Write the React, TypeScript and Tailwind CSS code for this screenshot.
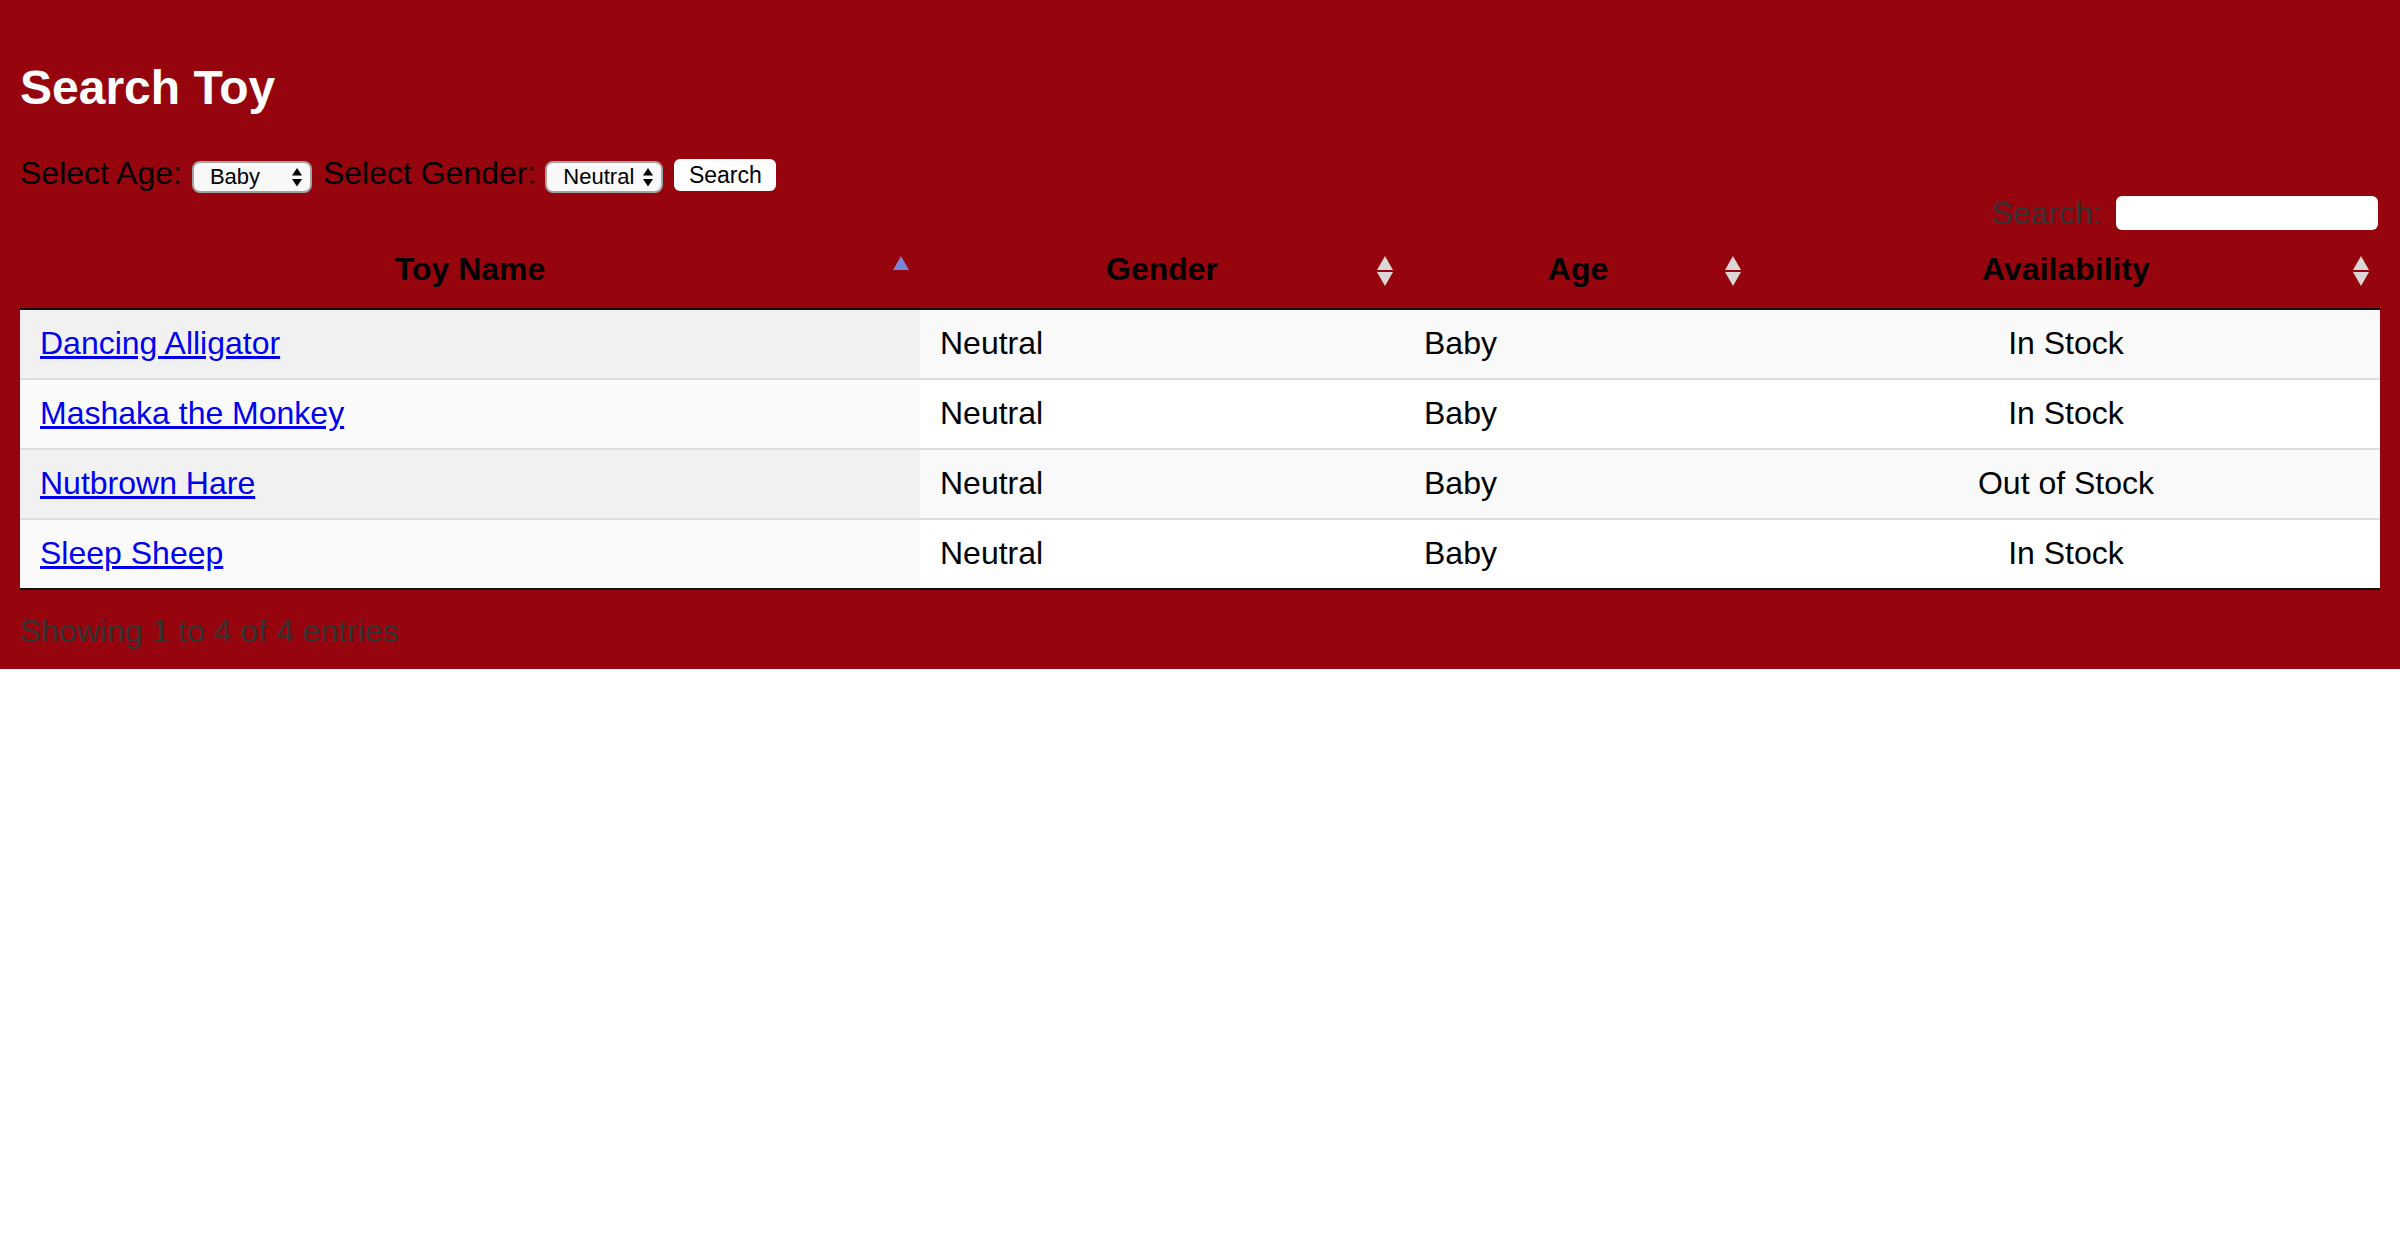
import React from 'react';

const toys = [
  { name: 'Dancing Alligator', gender: 'Neutral', age: 'Baby', availability: 'In Stock' },
  { name: 'Mashaka the Monkey', gender: 'Neutral', age: 'Baby', availability: 'In Stock' },
  { name: 'Nutbrown Hare', gender: 'Neutral', age: 'Baby', availability: 'Out of Stock' },
  { name: 'Sleep Sheep', gender: 'Neutral', age: 'Baby', availability: 'In Stock' },
];

const SortIcon: React.FC<{ active?: boolean }> = ({ active }) => (
  <svg className="absolute right-[11px] top-[26px]" width="16" height="30" viewBox="0 0 16 30">
    {active ? (
      <polygon points="8,0 16,14 0,14" fill="#7c84d8" />
    ) : (
      <>
        <polygon points="8,0 16,14 0,14" fill="#dcd6d6" />
        <polygon points="0,16 16,16 8,30" fill="#dcd6d6" />
      </>
    )}
  </svg>
);

const SelectArrows = () => (
  <svg className="pointer-events-none absolute right-[10px] top-[7px]" width="10" height="19" viewBox="0 0 10 19">
    <polygon points="5,0 10,7.5 0,7.5" fill="#000" />
    <polygon points="0,11 10,11 5,18.5" fill="#000" />
  </svg>
);

const FakeSelect: React.FC<{ value: string; options: string[]; width: string }> = ({ value, options, width }) => (
  <div className={`relative mt-[8px] h-[32px] ${width}`}>
    <select
      defaultValue={value}
      className="block h-full w-full appearance-none rounded-[8px] border-2 border-[#a3a3a3] bg-[#f8f8f8] pl-[16px] text-[22px] leading-[28px] text-black outline-none"
    >
      {options.map((o) => (
        <option key={o}>{o}</option>
      ))}
    </select>
    <SelectArrows />
  </div>
);

const App: React.FC = () => {
  return (
    <div className="min-h-screen bg-white font-['Liberation_Sans',Arial,sans-serif]">
      <div className="bg-[#96050d] px-[20px] pt-[60px] pb-[19px]">
        {/* Title */}
        <h1 className="text-[48px] font-bold leading-[56px] text-white">Search Toy</h1>

        {/* Filters */}
        <div className="mt-[37px] flex items-start text-[32px] leading-[40px] text-black">
          <span>Select Age:</span>
          <div className="ml-[10px]">
            <FakeSelect value="Baby" options={['Baby', 'Toddler', 'Child']} width="w-[120px]" />
          </div>
          <span className="ml-[11px]">Select Gender:</span>
          <div className="ml-[9px]">
            <FakeSelect value="Neutral" options={['Neutral', 'Boy', 'Girl']} width="w-[118px]" />
          </div>
          <button className="ml-[11px] mt-[6px] h-[32px] w-[102px] rounded-[6px] bg-white text-[23px] leading-[32px] text-black">
            Search
          </button>
        </div>

        {/* DataTables filter */}
        <div className="mt-[3px] flex h-[34px] items-center justify-end pr-[2px]">
          <label className="text-[32px] leading-[34px] text-[#333]">Search:</label>
          <input className="ml-[14px] h-[34px] w-[262px] rounded-[6px] bg-white px-[6px] text-[24px] outline-none" />
        </div>

        {/* Table */}
        <table className="w-full table-fixed border-separate border-spacing-0">
          <colgroup>
            <col className="w-[900px]" />
            <col className="w-[484px]" />
            <col className="w-[348px]" />
            <col className="w-[628px]" />
          </colgroup>
          <thead>
            <tr className="text-[32px] font-bold leading-[38px] text-black">
              <th className="relative border-b-2 border-[#111] px-[20px] py-[20px] text-center">
                Toy Name
                <SortIcon active />
              </th>
              <th className="relative border-b-2 border-[#111] px-[20px] py-[20px] text-center">
                Gender
                <SortIcon />
              </th>
              <th className="relative border-b-2 border-[#111] px-[20px] py-[20px] text-center">
                Age
                <SortIcon />
              </th>
              <th className="relative border-b-2 border-[#111] px-[20px] py-[20px] text-center">
                Availability
                <SortIcon />
              </th>
            </tr>
          </thead>
          <tbody className="text-[32px] leading-[36px] text-black">
            {toys.map((t, i) => {
              const odd = i % 2 === 0;
              const last = i === toys.length - 1;
              const edge = `${i > 0 ? 'border-t-2 border-t-[#dddddd]' : ''} ${last ? 'border-b-2 border-b-[#111]' : ''}`;
              return (
                <tr key={t.name}>
                  <td className={`px-[20px] pt-[15px] pb-[17px] ${odd ? 'bg-[#f1f1f1]' : 'bg-[#fafafa]'} ${edge}`}>
                    <a href="#" className="text-[#0000ee] underline">
                      {t.name}
                    </a>
                  </td>
                  <td className={`px-[20px] pt-[15px] pb-[17px] ${odd ? 'bg-[#f9f9f9]' : 'bg-white'} ${edge}`}>{t.gender}</td>
                  <td className={`px-[20px] pt-[15px] pb-[17px] ${odd ? 'bg-[#f9f9f9]' : 'bg-white'} ${edge}`}>{t.age}</td>
                  <td className={`px-[20px] pt-[15px] pb-[17px] text-center ${odd ? 'bg-[#f9f9f9]' : 'bg-white'} ${edge}`}>
                    {t.availability}
                  </td>
                </tr>
              );
            })}
          </tbody>
        </table>

        {/* Info */}
        <div className="pt-[23px] text-[32px] leading-[37px] text-[#333]">Showing 1 to 4 of 4 entries</div>
      </div>
    </div>
  );
};

export default App;
